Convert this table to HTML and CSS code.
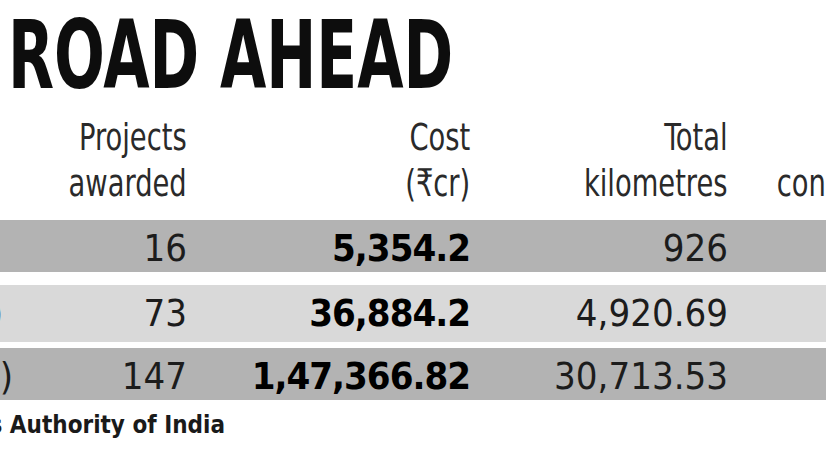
FILE: index.html
```html
<!DOCTYPE html>
<html lang="en">
<head>
    <meta charset="UTF-8">
    <title>Road Ahead</title>
    <link rel="stylesheet" href="styles.css">
</head>
<body>
    <div class="graphic">
        <h1 class="title"><span>ROAD AHEAD</span></h1>

        <div class="table">
            <div class="row head">
                <div class="cell label"></div>
                <div class="cell"><span>Projects<br>awarded</span></div>
                <div class="cell"><span>Cost<br>(₹cr)</span></div>
                <div class="cell"><span>Total<br>kilometres</span></div>
                <div class="cell"><span>Length<br>constructed</span></div>
            </div>

            <div class="row band dark first">
                <div class="cell label far">FY 2010-11</div>
                <div class="cell">16</div>
                <div class="cell strong">5,354.2</div>
                <div class="cell">926</div>
                <div class="cell"></div>
            </div>

            <div class="row band light second">
                <div class="cell label near">FY 2011-12 (till Dec)</div>
                <div class="cell">73</div>
                <div class="cell strong">36,884.2</div>
                <div class="cell">4,920.69</div>
                <div class="cell"></div>
            </div>

            <div class="row band dark third">
                <div class="cell label edge">Total (2009-2013)</div>
                <div class="cell">147</div>
                <div class="cell strong">1,47,366.82</div>
                <div class="cell">30,713.53</div>
                <div class="cell"></div>
            </div>
        </div>

        <p class="source"><span>Source: National Highways Authority of India</span></p>
    </div>
</body>
</html>
```

FILE: styles.css
```css
body {
    margin: 0;
    background: #fff;
    overflow: hidden;
    font-family: "DejaVu Sans Condensed", "DejaVu Sans", sans-serif;
    font-stretch: condensed;
    color: #1c1c1c;
}

.graphic {
    width: 826px;
    height: 465px;
    overflow: hidden;
}

.title {
    margin: 8px 0 0 8px;
    font-size: 95px;
    line-height: 95px;
    font-weight: bold;
    color: #0d0d0d;
    white-space: nowrap;
}

.title span {
    display: inline-block;
    transform: scaleX(0.7);
    transform-origin: left center;
}

.table {
    margin: 11px 0 0 -500px;
    width: 1500px;
}

.row {
    display: grid;
    grid-template-columns: 515px 172px 283px 258px 211px;
    font-size: 38px;
    white-space: nowrap;
}

.cell {
    text-align: right;
}

.head {
    line-height: 46px;
    color: #2a2a2a;
}

.head span {
    display: inline-block;
    transform: scaleX(0.8);
    transform-origin: right center;
}

.band {
    padding-top: 4px;
    line-height: 48px;
}

.dark {
    background: #b3b3b3;
}

.light {
    background: #d9d9d9;
}

.first {
    margin-top: 14px;
}

.second {
    margin-top: 13px;
    height: 57px;
    padding-top: 3px;
    line-height: 50px;
    box-sizing: border-box;
}

.third {
    margin-top: 6px;
}

.strong {
    font-weight: bold;
    color: #000;
    letter-spacing: -1px;
}

.label.far {
    padding-right: 40px;
}

.label.near {
    padding-right: 12px;
}

.label.edge {
    padding-right: 2px;
}

.source {
    margin: 11px 0 0 -500px;
    width: 725px;
    text-align: right;
    font-size: 24px;
    line-height: 28px;
    font-weight: bold;
    color: #1a1a1a;
    white-space: nowrap;
}
```
